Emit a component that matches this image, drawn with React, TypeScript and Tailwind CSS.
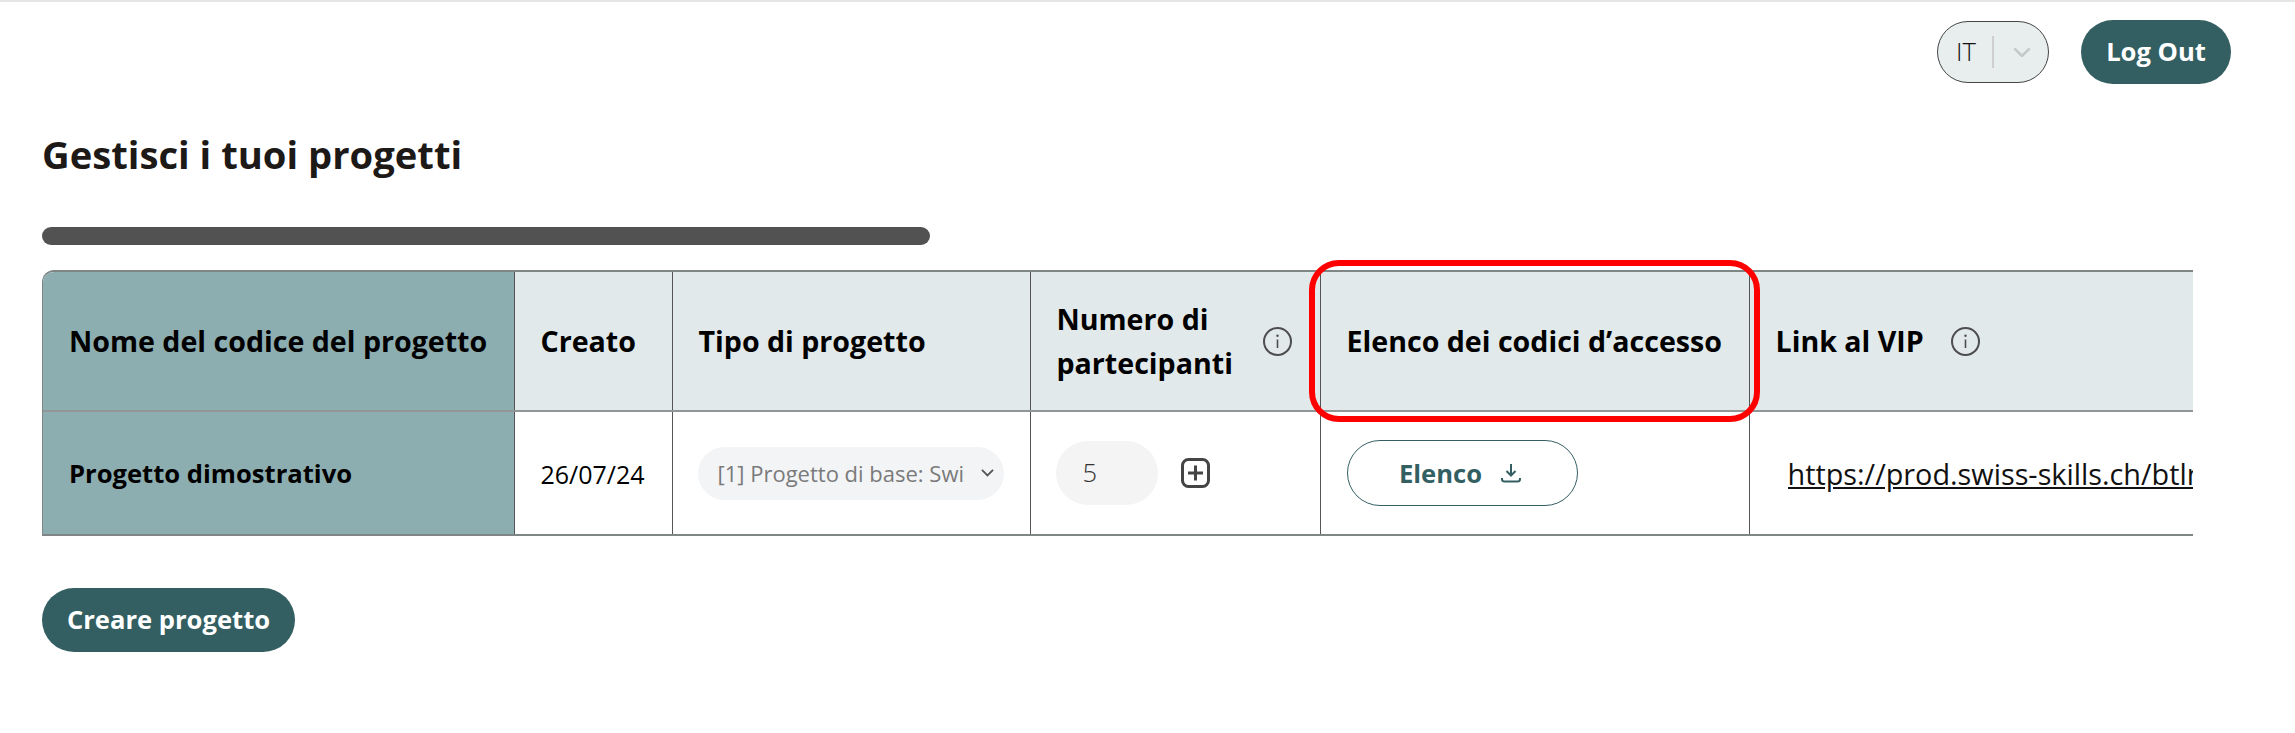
import React from "react";

const InfoIcon = () => (
  <svg width="29" height="29" viewBox="0 0 29 29" fill="none" className="shrink-0">
    <circle cx="14.5" cy="14.5" r="13.5" stroke="#4d4d4d" strokeWidth="2" />
    <circle cx="14.5" cy="8.8" r="1.2" fill="#4d4d4d" />
    <path d="M14.5 12.5V21" stroke="#4d4d4d" strokeWidth="1.6" />
  </svg>
);

const PlusIcon = () => (
  <svg width="29" height="30" viewBox="0 0 29 30" fill="none" className="shrink-0">
    <rect x="1.5" y="1.5" width="26" height="27" rx="6" stroke="#444" strokeWidth="3" />
    <path d="M14.5 7.5V22.5M7 15H22" stroke="#444" strokeWidth="3" />
  </svg>
);

const DownloadIcon = () => (
  <svg width="20" height="20" viewBox="0 0 20 20" fill="none" className="shrink-0">
    <path d="M10 1V12M5.5 8L10 12.5L14.5 8" stroke="#335f62" strokeWidth="2" />
    <path d="M1 15V16C1 17.5 2 18.5 3.5 18.5H16.5C18 18.5 19 17.5 19 16V15" stroke="#335f62" strokeWidth="2" />
  </svg>
);

const Chevron = ({ color, w = 14 }: { color: string; w?: number }) => (
  <svg width={w} height={w * 0.6} viewBox="0 0 14 8.4" fill="none" className="shrink-0">
    <path d="M1 1L7 7L13 1" stroke={color} strokeWidth="2" />
  </svg>
);

export default function App() {
  return (
    <div className="min-h-[733px] bg-white border-t-2 border-[#e5e5e5] font-['Open_Sans',sans-serif] text-black overflow-hidden">
      <header className="flex justify-end items-center gap-8 pr-16 pt-[18px]">
        <div className="flex items-center w-28 h-[62px] rounded-full border border-[#444] bg-[#e8eeee] pl-[18px]">
          <span className="text-[25.6px] font-light text-[#111] w-[36px]">IT</span>
          <span className="w-0.5 h-8 bg-[#cfcfcf]" />
          <span className="ml-[19px]">
            <Chevron color="#c4c8c8" w={18} />
          </span>
        </div>
        <button className="h-16 w-[150px] rounded-full bg-[#335f62] text-white text-[25.6px] font-bold">Log Out</button>
      </header>

      <main className="px-[42px]">
        <h1 className="mt-[46px] text-[38.2px] leading-[49px] font-bold text-[#1c1917]">Gestisci i tuoi progetti</h1>
        <div className="mt-12 w-[888px] h-[18px] rounded-full bg-[#525252]" />

        <div className="relative mt-[25px] w-[2151px]">
          <div className="overflow-hidden rounded-tl-xl border-t-2 border-b-2 border-l border-[#808686]">
            <table className="table-fixed border-collapse w-[2150px]">
              <colgroup>
                <col className="w-[471px]" />
                <col className="w-[158px]" />
                <col className="w-[358px]" />
                <col className="w-[290px]" />
                <col className="w-[429px]" />
                <col className="w-[444px]" />
              </colgroup>
              <thead>
                <tr className="h-[139px] text-[28.6px] leading-[44px] font-bold text-left border-b-2 border-[#909696]">
                  <th className="bg-[#8daeb0] pl-[26px] border-r border-[#555] whitespace-nowrap">Nome del codice del progetto</th>
                  <th className="bg-[#e1e9ea] pl-[26px] border-r border-[#555]">Creato</th>
                  <th className="bg-[#e1e9ea] pl-[26px] border-r border-[#555]">Tipo di progetto</th>
                  <th className="bg-[#e1e9ea] pl-[26px] pr-7 border-r border-[#555]">
                    <div className="flex items-center justify-between">
                      <span>
                        Numero di
                        <br />
                        partecipanti
                      </span>
                      <InfoIcon />
                    </div>
                  </th>
                  <th className="bg-[#e1e9ea] px-[26px] border-r border-[#555] whitespace-nowrap">Elenco dei codici d’accesso</th>
                  <th className="bg-[#e1e9ea] pl-[26px]">
                    <div className="flex items-center gap-[27px]">
                      <span>Link al VIP</span>
                      <InfoIcon />
                    </div>
                  </th>
                </tr>
              </thead>
              <tbody>
                <tr className="h-[123px] text-[25.6px]">
                  <td className="bg-[#8daeb0] pl-[26px] pt-[3px] font-bold border-r border-[#555]">Progetto dimostrativo</td>
                  <td className="pl-[26px] pt-[3px] text-[25px] border-r border-[#555]">26/07/24</td>
                  <td className="px-[25px] border-r border-[#555]">
                    <div className="flex items-center w-[306px] h-[53px] rounded-full bg-[#f3f4f6] pl-5 pr-2.5 text-[22px] text-[#7a7a7a]">
                      <span className="w-[247px] overflow-hidden whitespace-nowrap">[1] Progetto di base: Swiss Skills</span>
                      <span className="ml-auto">
                        <Chevron color="#555" w={13} />
                      </span>
                    </div>
                  </td>
                  <td className="px-[25px] border-r border-[#555]">
                    <div className="flex items-center gap-[23px]">
                      <div className="w-[102px] h-16 rounded-full bg-[#f4f4f4] pl-[27px] leading-16 font-light text-[#333]">5</div>
                      <PlusIcon />
                    </div>
                  </td>
                  <td className="px-[26px] border-r border-[#555]">
                    <button className="flex items-center justify-center gap-[19px] w-[231px] h-[66px] pr-1 rounded-full border border-[#335f62] text-[#335f62] font-bold">
                      <span className="pt-0.5">Elenco</span>
                      <DownloadIcon />
                    </button>
                  </td>
                  <td className="pl-[38px] pt-0.5">
                    <div className="overflow-hidden whitespace-nowrap">
                      <a className="underline text-[28.8px] text-[#111]">https://prod.swiss-skills.ch/btlnk/demo</a>
                    </div>
                  </td>
                </tr>
              </tbody>
            </table>
          </div>
          <div className="absolute left-[1267px] -top-2.5 w-[451px] h-[162px] rounded-[30px] border-[6px] border-[#ff0000] pointer-events-none" />
        </div>

        <button className="mt-[52px] h-16 w-[253px] rounded-full bg-[#335f62] text-white text-[25.6px] font-bold">Creare progetto</button>
      </main>
    </div>
  );
}
